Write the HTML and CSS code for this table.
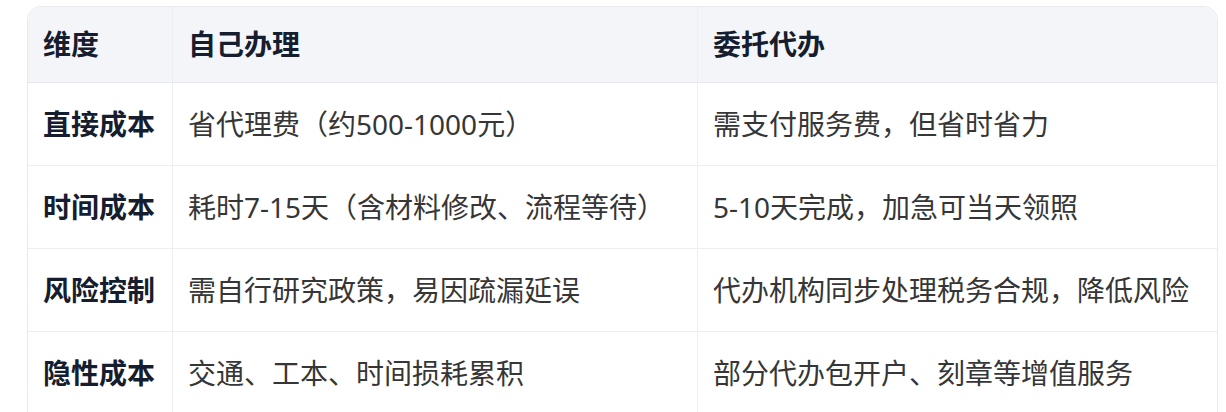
FILE: index.html
```html
<!DOCTYPE html>
<html lang="zh-CN">
<head>
<meta charset="utf-8">
<title>自己办理 vs 委托代办</title>
<link rel="stylesheet" href="styles.css">
</head>
<body>
<div class="wrap">
  <table class="cmp">
    <colgroup>
      <col class="c1"><col class="c2"><col class="c3">
    </colgroup>
    <thead>
      <tr><th>维度</th><th>自己办理</th><th>委托代办</th></tr>
    </thead>
    <tbody>
      <tr><td class="dim">直接成本</td><td>省代理费（约500-1000元）</td><td>需支付服务费，但省时省力</td></tr>
      <tr><td class="dim">时间成本</td><td>耗时7-15天（含材料修改、流程等待）</td><td>5-10天完成，加急可当天领照</td></tr>
      <tr><td class="dim">风险控制</td><td>需自行研究政策，易因疏漏延误</td><td>代办机构同步处理税务合规，降低风险</td></tr>
      <tr><td class="dim">隐性成本</td><td>交通、工本、时间损耗累积</td><td>部分代办包开户、刻章等增值服务</td></tr>
    </tbody>
  </table>
</div>
</body>
</html>
```

FILE: styles.css
```css
html, body {
  margin: 0;
  padding: 0;
  background: #ffffff;
}
body {
  font-family: "Noto Sans", "Noto Sans CJK SC", sans-serif;
  font-size: 28px;
  color: #363636;
}
.wrap {
  padding: 6px 0 0 27px;
}
.cmp {
  width: 1191px;
  border-collapse: separate;
  border-spacing: 0;
  table-layout: fixed;
  border: 1px solid #e9eaee;
  border-radius: 14px 14px 0 0;
  overflow: hidden;
}
.c1 { width: 145px; }
.c2 { width: 525px; }
.c3 { width: auto; }
.cmp th,
.cmp td {
  text-align: left;
  line-height: 42px;
  padding: 20px 15px 20px 15px;
  border-right: 1px solid #eceef1;
  border-bottom: 1px solid #eceef1;
  white-space: nowrap;
}
.cmp th:last-child,
.cmp td:last-child {
  border-right: none;
}
.cmp thead th {
  background: #f4f5f9;
  color: #161d2e;
  font-weight: 700;
  padding-top: 16px;
  padding-bottom: 17px;
  border-bottom-color: #e7e8ec;
}
.cmp td.dim {
  color: #161d2e;
  font-weight: 700;
}
```
